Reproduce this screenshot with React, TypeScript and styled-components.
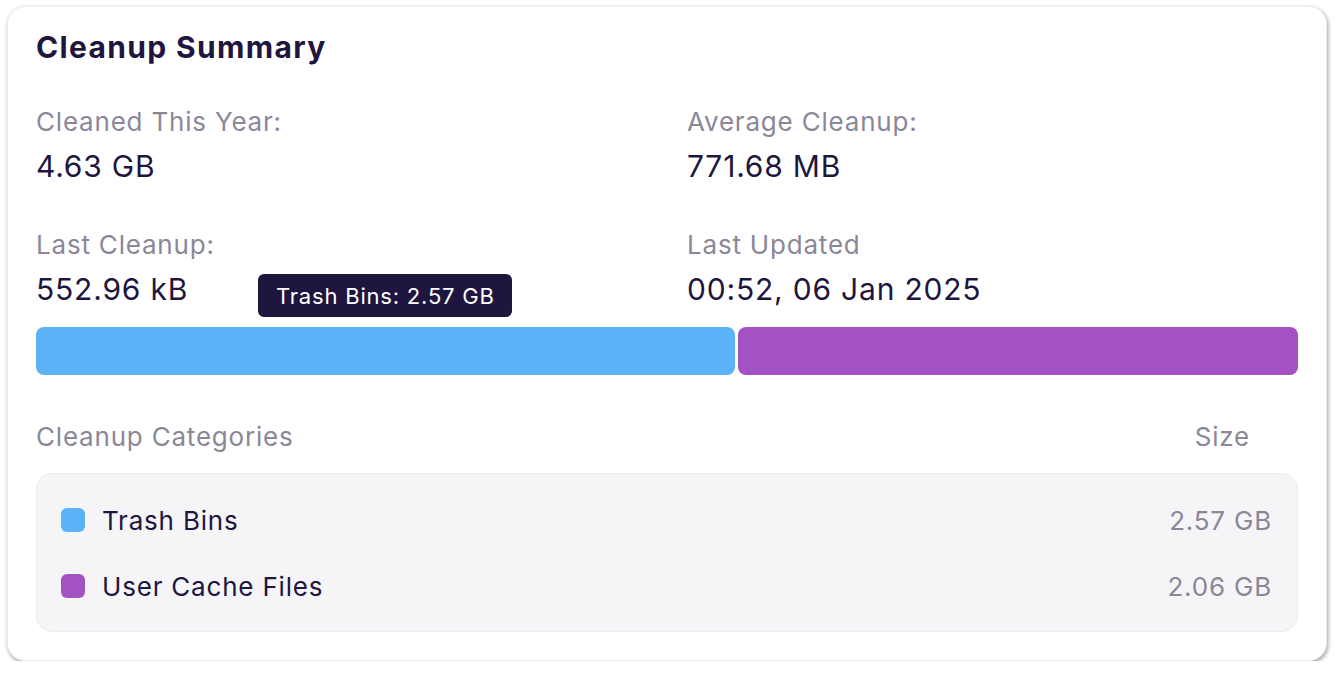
import React from 'react';
import styled, { createGlobalStyle } from 'styled-components';

const GlobalStyle = createGlobalStyle`
    html, body {
        margin: 0;
        padding: 0;
        background: #ffffff;
    }
    body {
        font-family: Inter, "Noto Sans", "Liberation Sans", sans-serif;
        letter-spacing: 0.05em;
        color: #1f1640;
    }
`;

const Page = styled.div`
    padding: 6px 0 0 7px;
`;

const Card = styled.div`
    box-sizing: border-box;
    width: 1320px;
    height: 655px;
    background: #ffffff;
    border: 1px solid #ededf0;
    border-radius: 18px;
    box-shadow: 1px 2px 4px rgba(0, 0, 0, 0.38);
    padding: 23px 28px 0 28px;
    display: flex;
    flex-direction: column;
`;

const Title = styled.h2`
    margin: 0;
    font-size: 30px;
    line-height: 34px;
    font-weight: 700;
    letter-spacing: 0.045em;
    color: #1f1640;
`;

const StatsGrid = styled.div`
    margin-top: 40px;
    display: grid;
    grid-template-columns: 1fr 1fr;
    column-gap: 40px;
    row-gap: 41px;
`;

const Stat = styled.div`
    display: flex;
    flex-direction: column;
    gap: 6px;
`;

const Label = styled.div`
    font-size: 26px;
    line-height: 36px;
    color: #8b8799;
`;

const Value = styled.div`
    font-size: 30px;
    line-height: 40px;
    color: #1f1640;
`;

const BarWrap = styled.div`
    position: relative;
    margin-top: 18px;
    display: flex;
    gap: 3px;
    height: 48px;
`;

const Segment = styled.div<{ $color: string }>`
    height: 100%;
    border-radius: 8px;
    background: ${(p) => p.$color};
`;

const Tooltip = styled.div`
    position: absolute;
    left: 222px;
    bottom: calc(100% + 10px);
    height: 43px;
    padding: 0 17px 0 18px;
    display: flex;
    align-items: center;
    border-radius: 6px;
    background: #1f1640;
    color: #ffffff;
    font-size: 22px;
    white-space: nowrap;
`;

const TableHeader = styled.div`
    margin-top: 44px;
    display: flex;
    justify-content: space-between;
    padding-right: 48px;
`;

const Table = styled.div`
    margin-top: 18px;
    box-sizing: border-box;
    height: 159px;
    background: #f5f5f8;
    border: 1px solid #ececf0;
    border-radius: 16px;
    padding: 26px 25px 0 24px;
    display: flex;
    flex-direction: column;
    gap: 26px;
`;

const Row = styled.div`
    display: flex;
    align-items: center;
    height: 40px;
`;

const Dot = styled.span<{ $color: string }>`
    width: 24px;
    height: 24px;
    border-radius: 6px;
    background: ${(p) => p.$color};
    margin-right: 17px;
    flex-shrink: 0;
`;

const RowName = styled.span`
    flex: 1;
    font-size: 26px;
    color: #1f1640;
`;

const RowSize = styled.span`
    font-size: 26px;
    color: #8b8799;
`;

const categories = [
    { name: 'Trash Bins', size: '2.57 GB', bytes: 2.57, color: '#5cb2f6' },
    { name: 'User Cache Files', size: '2.06 GB', bytes: 2.06, color: '#a352c4' },
];

const App: React.FC = () => {
    const total = categories.reduce((s, c) => s + c.bytes, 0);

    return (
        <Page>
            <GlobalStyle />
            <Card>
                <Title>Cleanup Summary</Title>
                <StatsGrid>
                    <Stat>
                        <Label>Cleaned This Year:</Label>
                        <Value>4.63 GB</Value>
                    </Stat>
                    <Stat>
                        <Label>Average Cleanup:</Label>
                        <Value>771.68 MB</Value>
                    </Stat>
                    <Stat>
                        <Label>Last Cleanup:</Label>
                        <Value>552.96 kB</Value>
                    </Stat>
                    <Stat>
                        <Label>Last Updated</Label>
                        <Value>00:52, 06 Jan 2025</Value>
                    </Stat>
                </StatsGrid>
                <BarWrap>
                    {categories.map((c) => (
                        <Segment
                            key={c.name}
                            $color={c.color}
                            style={{ flex: c.bytes / total }}
                        />
                    ))}
                    <Tooltip>Trash Bins: 2.57 GB</Tooltip>
                </BarWrap>
                <TableHeader>
                    <Label>Cleanup Categories</Label>
                    <Label>Size</Label>
                </TableHeader>
                <Table>
                    {categories.map((c) => (
                        <Row key={c.name}>
                            <Dot $color={c.color} />
                            <RowName>{c.name}</RowName>
                            <RowSize>{c.size}</RowSize>
                        </Row>
                    ))}
                </Table>
            </Card>
        </Page>
    );
};

export default App;
